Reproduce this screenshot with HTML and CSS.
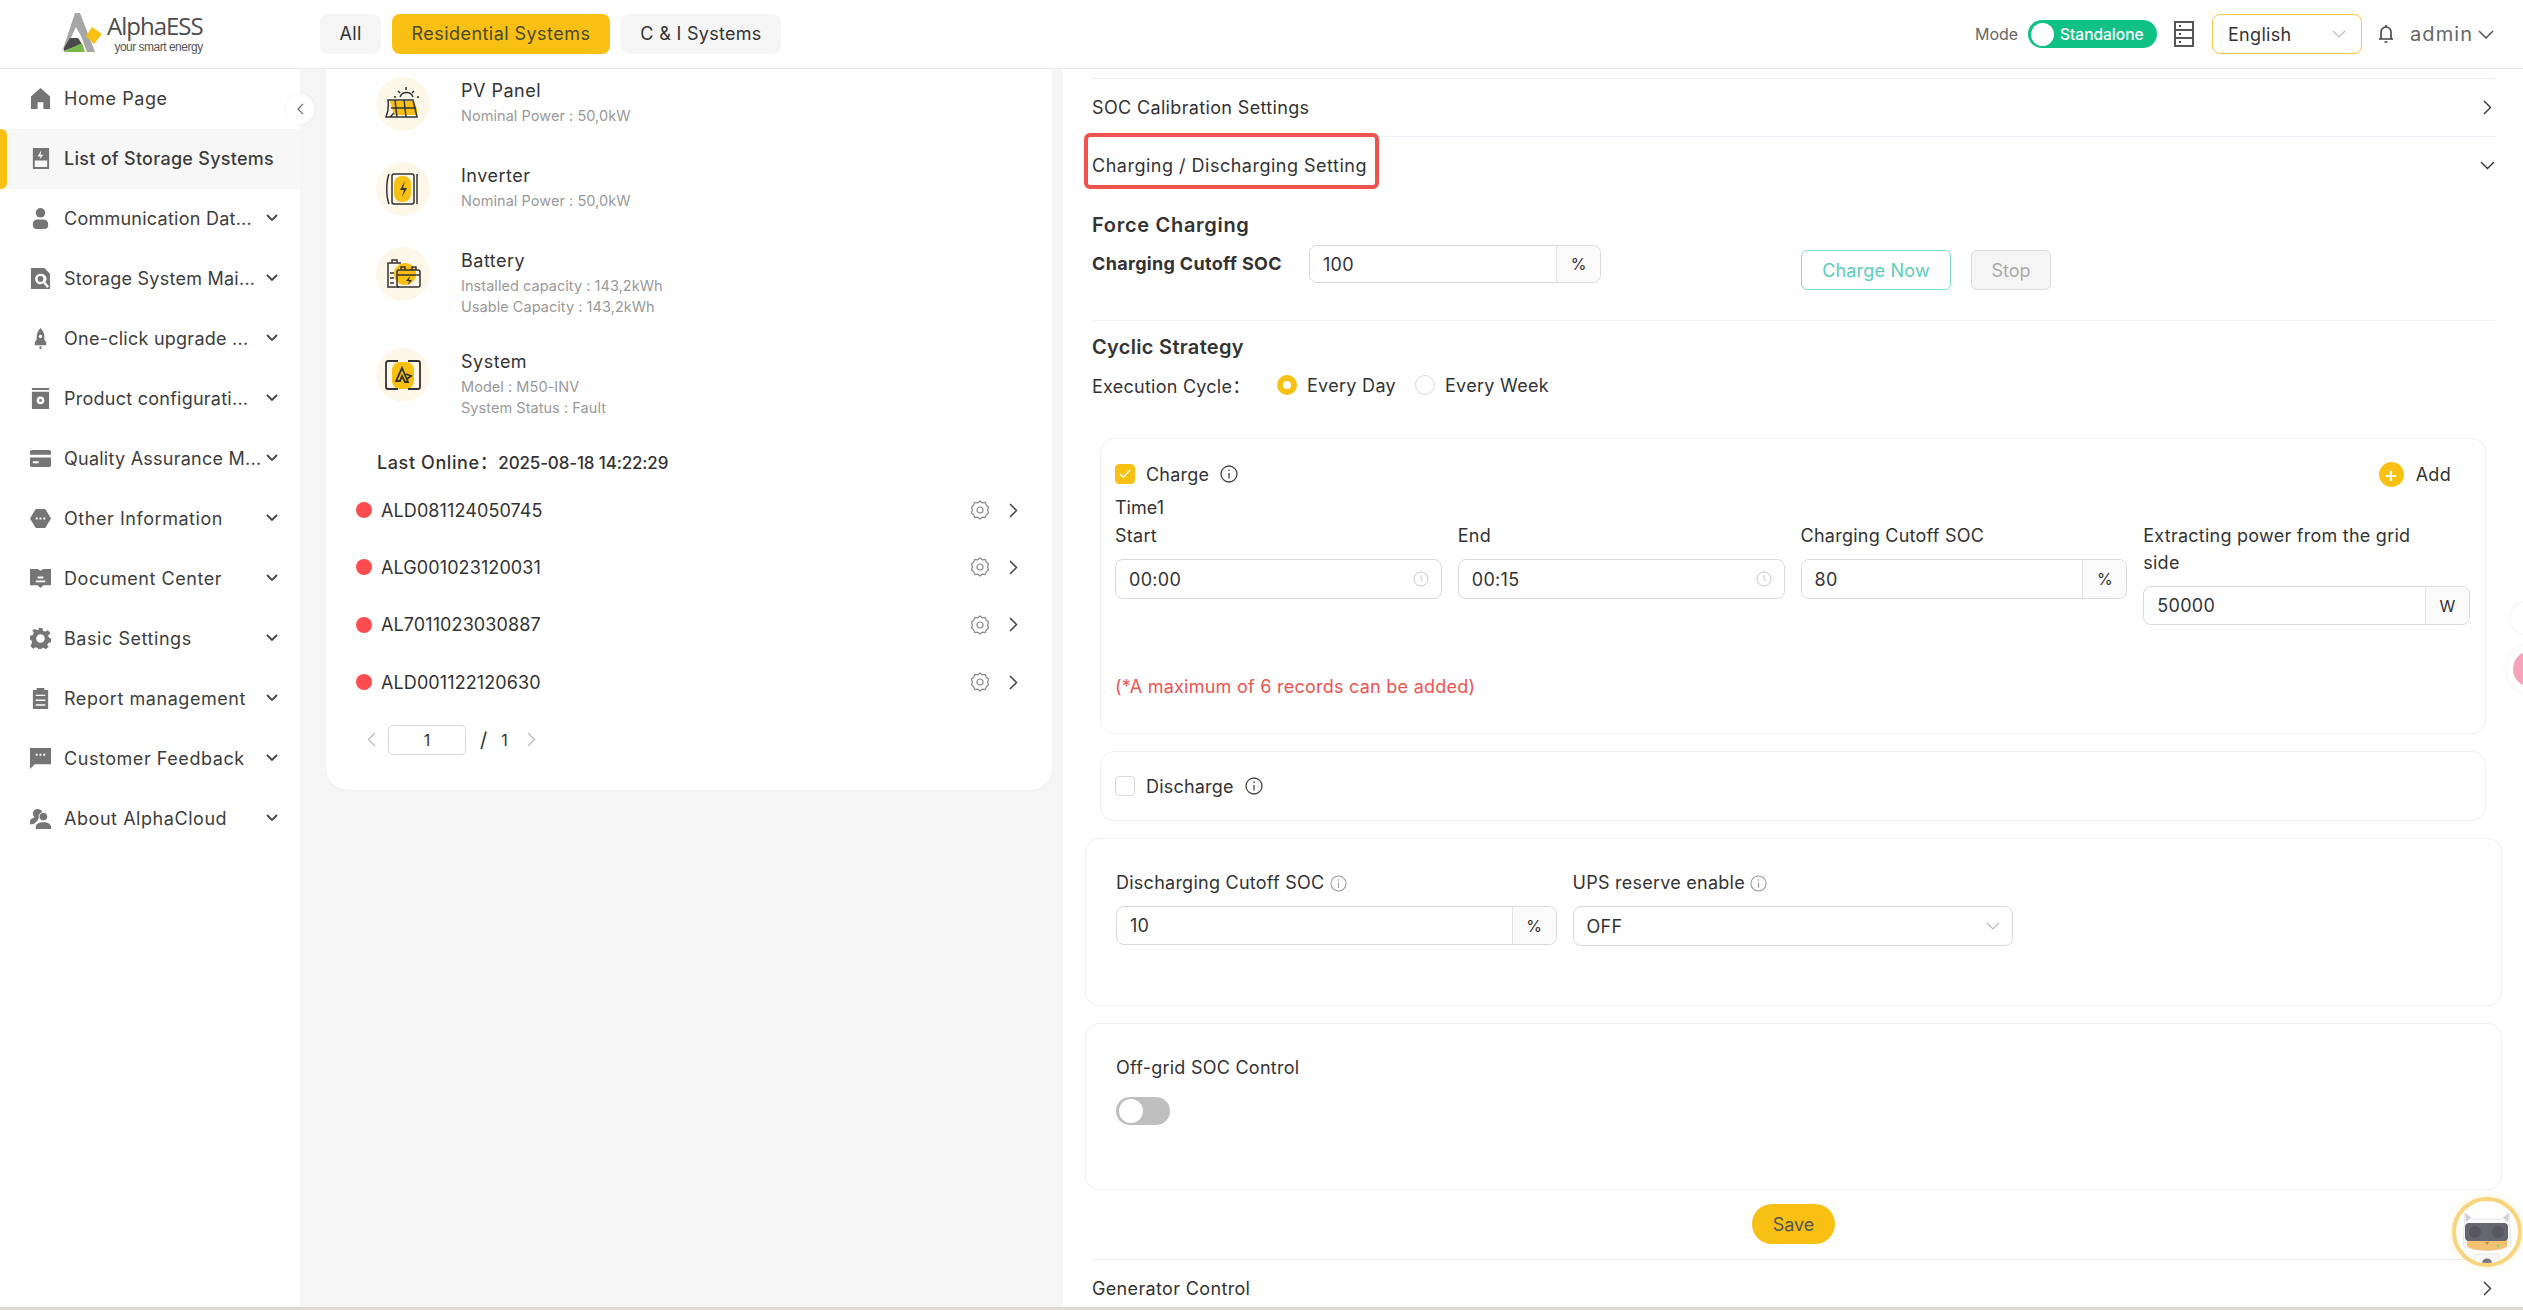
FILE: index.html
```html
<!DOCTYPE html>
<html lang="en">
<head>
    <meta charset="UTF-8">
    <meta name="viewport" content="width=device-width, initial-scale=1.0">
    <title>AlphaESS</title>
    <link rel="stylesheet" href="styles.css">
</head>
<body>
    <header class="topbar">
        <div class="logo">
            <svg class="logo-mark" viewBox="0 0 42 40" width="42" height="40">
                <path d="M13 0h5l15 39h-8l-6-16-5-9-6 13-8 12Z" fill="#a6a6a6"/>
                <path d="M2 35 8 25h8l4 6-18 7Z" fill="#4a4a4a"/>
                <path d="M1 39 20 30l3 9Z" fill="#7ab648"/>
                <path d="M24 23 30 14l10 7-8 10Z" fill="#f8c012"/>
            </svg>
            <div class="logo-text">
                <div class="logo-name">AlphaESS</div>
                <div class="logo-tag">your smart energy</div>
            </div>
        </div>
        <nav class="tabs">
            <span class="tab">All</span>
            <span class="tab tab-active">Residential Systems</span>
            <span class="tab">C &amp; I Systems</span>
        </nav>
        <div class="top-right">
            <span class="mode-label">Mode</span>
            <span class="mode-switch"><i class="mode-knob"></i>Standalone</span>
            <svg class="server-icon" viewBox="0 0 20 26" width="20" height="26" fill="none" stroke="#555" stroke-width="2">
                <rect x="1" y="1" width="18" height="24"/>
                <path d="M1 9h18M1 17h18"/>
                <path d="M5 5h2M5 13h2M5 21h2"/>
            </svg>
            <div class="lang-select">
                <span>English</span>
                <svg viewBox="0 0 14 8" width="14" height="8" fill="none" stroke="#bbb" stroke-width="1.2"><path d="M1 1l6 6 6-6"/></svg>
            </div>
            <svg class="bell-icon" viewBox="0 0 16 20" width="16" height="20" fill="none" stroke="#444" stroke-width="1.6">
                <path d="M3 15V8a5 5 0 0 1 10 0v7ZM1 15h14"/>
                <path d="M8 1v2M6.5 18h3"/>
            </svg>
            <span class="user-name">admin</span>
            <svg viewBox="0 0 16 9" width="16" height="9" fill="none" stroke="#555" stroke-width="1.5"><path d="M1 1l7 7 7-7"/></svg>
        </div>
    </header>

    <div class="layout">
        <aside class="sidebar">
            <div class="collapse-btn">
                <svg viewBox="0 0 8 14" width="7" height="12" fill="none" stroke="#666" stroke-width="1.4"><path d="M7 1 1 7l6 6"/></svg>
            </div>
            <a class="nav-item">
                <svg class="nav-icon" viewBox="0 0 22 22"><path d="M11 0 1 9v13h7v-7h6v7h7V9Z"/></svg>
                <span class="nav-text">Home Page</span>
            </a>
            <a class="nav-item nav-active">
                <svg class="nav-icon" viewBox="0 0 22 22"><path fill-rule="evenodd" d="M3 0h17v22H3ZM5 13v7h13v-7ZM12 2 8 9h3l-1 3 4-5h-3Z"/></svg>
                <span class="nav-text">List of Storage Systems</span>
            </a>
            <a class="nav-item">
                <svg class="nav-icon" viewBox="0 0 22 22"><circle cx="11" cy="5" r="5"/><path d="M3 16a5 5 0 0 1 5-4h6a5 5 0 0 1 5 4v2a4 4 0 0 1-4 4H7a4 4 0 0 1-4-4Z"/></svg>
                <span class="nav-text nav-cut">Communication Dat...</span>
                <svg class="nav-arrow" viewBox="0 0 12 8"><path d="M1 1l5 5 5-5"/></svg>
            </a>
            <a class="nav-item">
                <svg class="nav-icon" viewBox="0 0 22 22"><path fill-rule="evenodd" d="M1 0h14l6 6v16H1ZM11 6a5.500 5.500 0 1 0 3 10l4 5 2-2-4-4a5.500 5.500 0 0 0-5-9Zm0 2.500a3 3 0 1 1 0 6 3 3 0 0 1 0-6Z"/></svg>
                <span class="nav-text nav-cut">Storage System Mai...</span>
                <svg class="nav-arrow" viewBox="0 0 12 8"><path d="M1 1l5 5 5-5"/></svg>
            </a>
            <a class="nav-item">
                <svg class="nav-icon" viewBox="0 0 22 22"><path fill-rule="evenodd" d="M11 0c3 3 4 6 4 9v3l2 3v3h-4H9 5v-3l2-3V9c0-3 1-6 4-9Zm0 7a1.800 1.800 0 1 0 0 3.600 1.800 1.800 0 0 0 0-3.600ZM10 19h2v3h-2Z"/></svg>
                <span class="nav-text nav-cut">One-click upgrade ...</span>
                <svg class="nav-arrow" viewBox="0 0 12 8"><path d="M1 1l5 5 5-5"/></svg>
            </a>
            <a class="nav-item">
                <svg class="nav-icon" viewBox="0 0 22 22"><path fill-rule="evenodd" d="M2 0h18v2H2ZM2 4h18v18H2ZM11 9a4 4 0 1 0 0 8 4 4 0 0 0 0-8Zm0 2.500a1.500 1.500 0 1 1 0 3 1.500 1.500 0 0 1 0-3Z"/></svg>
                <span class="nav-text nav-cut">Product configurati...</span>
                <svg class="nav-arrow" viewBox="0 0 12 8"><path d="M1 1l5 5 5-5"/></svg>
            </a>
            <a class="nav-item">
                <svg class="nav-icon" viewBox="0 0 22 22"><path fill-rule="evenodd" d="M2 2h18a2 2 0 0 1 2 2v14a2 2 0 0 1-2 2H2a2 2 0 0 1-2-2V4a2 2 0 0 1 2-2Zm-2 5v3h22V7ZM3 14v2h6v-2Z"/></svg>
                <span class="nav-text nav-cut">Quality Assurance M...</span>
                <svg class="nav-arrow" viewBox="0 0 12 8"><path d="M1 1l5 5 5-5"/></svg>
            </a>
            <a class="nav-item">
                <svg class="nav-icon" viewBox="0 0 22 22"><path fill-rule="evenodd" d="M6 1h10l6 10-6 10H6L0 11Zm0 9v2h2v-2Zm4 0v2h2v-2Zm4 0v2h2v-2Z"/></svg>
                <span class="nav-text">Other Information</span>
                <svg class="nav-arrow" viewBox="0 0 12 8"><path d="M1 1l5 5 5-5"/></svg>
            </a>
            <a class="nav-item">
                <svg class="nav-icon" viewBox="0 0 22 22"><path fill-rule="evenodd" d="M0 1h8l3 2 3-2h8v17h-8l-3 3-3-3H0Zm8 8v2h6V9Zm-2 4v2h10v-2Z"/></svg>
                <span class="nav-text">Document Center</span>
                <svg class="nav-arrow" viewBox="0 0 12 8"><path d="M1 1l5 5 5-5"/></svg>
            </a>
            <a class="nav-item">
                <svg class="nav-icon" viewBox="0 0 22 22"><path fill-rule="evenodd" d="M9 0h4l.6 3 2.400 1 2.600-1.600 2.800 2.800L19 7.800l1 2.400 2 .8v4l-3 .6-1 2.400 1.600 1.400-2.800 2.800-2.600-1.600-2.200.8-.6 2.500H9l-.6-2.700-2.400-1-2.600 1.600-2.800-2.800L2.200 15l-1-2.400L0 12V8l3-.6 1-2.400-1.600-2.600L5.200 1l2.600 1.400L9 2Zm2 6.500a4.500 4.500 0 1 0 0 9 4.500 4.500 0 0 0 0-9Z"/></svg>
                <span class="nav-text">Basic Settings</span>
                <svg class="nav-arrow" viewBox="0 0 12 8"><path d="M1 1l5 5 5-5"/></svg>
            </a>
            <a class="nav-item">
                <svg class="nav-icon" viewBox="0 0 22 22"><path fill-rule="evenodd" d="M7 0h8v2h4v20H3V2h4Zm-1 7v1.500h10V7Zm0 5v1.500h10V12Zm0 5v1.500h10V17Z"/></svg>
                <span class="nav-text">Report management</span>
                <svg class="nav-arrow" viewBox="0 0 12 8"><path d="M1 1l5 5 5-5"/></svg>
            </a>
            <a class="nav-item">
                <svg class="nav-icon" viewBox="0 0 22 22"><path fill-rule="evenodd" d="M0 0h22v17H5l-5 5ZM6 6v2h2V6Zm4 0v2h2V6Zm4 0v2h2V6Z"/></svg>
                <span class="nav-text">Customer Feedback</span>
                <svg class="nav-arrow" viewBox="0 0 12 8"><path d="M1 1l5 5 5-5"/></svg>
            </a>
            <a class="nav-item">
                <svg class="nav-icon" viewBox="0 0 22 22"><circle cx="8" cy="6" r="5"/><path d="M0 14c0-2 2-3 4-4h5l-1 3-3 3-2 1H0Z"/><circle cx="14" cy="9" r="4.500" stroke="#fff"/><path d="M6 22v-2c0-3 3-5 8-5s8 2 8 5v2Z"/></svg>
                <span class="nav-text">About AlphaCloud</span>
                <svg class="nav-arrow" viewBox="0 0 12 8"><path d="M1 1l5 5 5-5"/></svg>
            </a>
        </aside>

        <section class="device-panel">
            <div class="device-info">
                <div class="device-icon">
                    <svg viewBox="0 0 36 36" width="36" height="36" fill="none" stroke="#333" stroke-width="1.500">
                        <path d="M5 15h24l3 8v6H9Z" fill="#f8c012" stroke="none"/>
                        <path d="M3 14h25l4 17H1c2-5 3-10 2-17ZM5 31l4-4M10 14l2 17M19 14l2 17M6 22h25"/>
                        <path d="M15 11a7 7 0 0 1 13 0M21 1v3M13 5l2 2M29 5l-2 2M9 11h2M32 11h2"/>
                    </svg>
                </div>
                <div class="device-text">
                    <div class="device-name">PV Panel</div>
                    <div class="device-sub">Nominal Power : 50,0kW</div>
                </div>
            </div>
            <div class="device-info">
                <div class="device-icon">
                    <svg viewBox="0 0 36 36" width="36" height="36" fill="none" stroke="#333" stroke-width="1.500">
                        <rect x="9" y="5" width="17" height="26" rx="8" fill="#f8c012" stroke="none"/>
                        <rect x="7" y="3" width="22" height="30" rx="2"/>
                        <path d="M4 3c-3 8-3 22 0 30M32 3v30"/>
                        <path d="M20 10l-5 9h4l-2 7 5-9h-4Z" fill="#333" stroke="none"/>
                    </svg>
                </div>
                <div class="device-text">
                    <div class="device-name">Inverter</div>
                    <div class="device-sub">Nominal Power : 50,0kW</div>
                </div>
            </div>
            <div class="device-info">
                <div class="device-icon">
                    <svg viewBox="0 0 36 36" width="36" height="36" fill="none" stroke="#333" stroke-width="1.500">
                        <circle cx="20" cy="18" r="11" fill="#f8c012" stroke="none"/>
                        <path d="M14 31H3V7h13M7 7V4h5v3M5 17h4M5 22h4M5 27h4"/>
                        <rect x="12" y="14" width="23" height="17" rx="2"/>
                        <path d="M16 14v-3h4v3M27 14v-3h4v3M12 19h23"/>
                        <path d="M25 20l-4 5h3l-1 4 4-5h-3Z" fill="#333" stroke="none"/>
                    </svg>
                </div>
                <div class="device-text">
                    <div class="device-name">Battery</div>
                    <div class="device-sub">Installed capacity : 143,2kWh</div>
                    <div class="device-sub">Usable Capacity : 143,2kWh</div>
                </div>
            </div>
            <div class="device-info device-last">
                <div class="device-icon">
                    <svg viewBox="0 0 36 36" width="36" height="36" fill="none" stroke="#333" stroke-width="1.800">
                        <rect x="7" y="5" width="22" height="27" rx="8" fill="#f8c012" stroke="none"/>
                        <path d="M13 4H3a2 2 0 0 0-2 2v24a2 2 0 0 0 2 2h10M23 4h10a2 2 0 0 1 2 2v24a2 2 0 0 1-2 2H23"/>
                        <path d="M17 11l-6 13h4l2-5 3 6h3ZM21 17l5 2-4 3"/>
                    </svg>
                </div>
                <div class="device-text">
                    <div class="device-name">System</div>
                    <div class="device-sub">Model : M50-INV</div>
                    <div class="device-sub">System Status : Fault</div>
                </div>
            </div>

            <div class="last-online">Last Online：<span class="last-date">2025-08-18 14:22:29</span></div>

            <div class="sn-list">
                <div class="sn-row">
                    <i class="sn-dot"></i>
                    <span class="sn-code">ALD081124050745</span>
                    <svg class="sn-gear" viewBox="0 0 20 20"><path d="M10 1l2.300 1.800 2.900-.3 1.100 2.700 2.200 1.800-.9 3 .9 3-2.200 1.800-1.100 2.700-2.900-.3L10 19l-2.300-1.800-2.900.3-1.100-2.700-2.200-1.800.9-3-.9-3 2.200-1.800 1.100-2.700 2.900.3Z"/><circle cx="10" cy="10" r="3"/></svg>
                    <svg class="sn-arrow" viewBox="0 0 9 15"><path d="M1 1l6.500 6.500L1 14"/></svg>
                </div>
                <div class="sn-row">
                    <i class="sn-dot"></i>
                    <span class="sn-code">ALG001023120031</span>
                    <svg class="sn-gear" viewBox="0 0 20 20"><path d="M10 1l2.300 1.800 2.900-.3 1.100 2.700 2.200 1.800-.9 3 .9 3-2.200 1.800-1.100 2.700-2.900-.3L10 19l-2.300-1.800-2.900.3-1.100-2.700-2.200-1.800.9-3-.9-3 2.200-1.800 1.100-2.700 2.900.3Z"/><circle cx="10" cy="10" r="3"/></svg>
                    <svg class="sn-arrow" viewBox="0 0 9 15"><path d="M1 1l6.500 6.500L1 14"/></svg>
                </div>
                <div class="sn-row">
                    <i class="sn-dot"></i>
                    <span class="sn-code">AL7011023030887</span>
                    <svg class="sn-gear" viewBox="0 0 20 20"><path d="M10 1l2.300 1.800 2.900-.3 1.100 2.700 2.200 1.800-.9 3 .9 3-2.200 1.800-1.100 2.700-2.900-.3L10 19l-2.300-1.800-2.900.3-1.100-2.700-2.200-1.800.9-3-.9-3 2.200-1.800 1.100-2.700 2.900.3Z"/><circle cx="10" cy="10" r="3"/></svg>
                    <svg class="sn-arrow" viewBox="0 0 9 15"><path d="M1 1l6.500 6.500L1 14"/></svg>
                </div>
                <div class="sn-row">
                    <i class="sn-dot"></i>
                    <span class="sn-code">ALD001122120630</span>
                    <svg class="sn-gear" viewBox="0 0 20 20"><path d="M10 1l2.300 1.800 2.900-.3 1.100 2.700 2.200 1.800-.9 3 .9 3-2.200 1.800-1.100 2.700-2.900-.3L10 19l-2.300-1.800-2.900.3-1.100-2.700-2.200-1.800.9-3-.9-3 2.200-1.800 1.100-2.700 2.900.3Z"/><circle cx="10" cy="10" r="3"/></svg>
                    <svg class="sn-arrow" viewBox="0 0 9 15"><path d="M1 1l6.500 6.500L1 14"/></svg>
                </div>
            </div>

            <div class="pager">
                <svg class="pager-arrow" viewBox="0 0 9 15"><path d="M8 1 1.500 7.500 8 14"/></svg>
                <span class="pager-input">1</span>
                <span class="pager-slash">/</span>
                <span class="pager-total">1</span>
                <svg class="pager-arrow" viewBox="0 0 9 15"><path d="M1 1l6.500 6.500L1 14"/></svg>
            </div>
        </section>

        <main class="settings-panel">
            <div class="fold-row fold-first">
                <span>SOC Calibration Settings</span>
                <svg class="fold-arrow" viewBox="0 0 9 15"><path d="M1 1l6.500 6.500L1 14"/></svg>
            </div>
            <div class="fold-row fold-open">
                <span>Charging / Discharging Setting</span>
                <svg class="fold-arrow-down" viewBox="0 0 15 9"><path d="M1 1l6.500 6.500L14 1"/></svg>
                <div class="mark-box"></div>
            </div>

            <section class="force-block">
                <h2 class="block-title">Force Charging</h2>
                <div class="force-row">
                    <label class="force-label">Charging Cutoff SOC</label>
                    <div class="field force-field"><span class="field-value">100</span><span class="field-unit">%</span></div>
                    <button class="btn-charge">Charge Now</button>
                    <button class="btn-stop">Stop</button>
                </div>
            </section>

            <section class="cyclic-block">
                <h2 class="block-title">Cyclic Strategy</h2>
                <div class="cycle-row">
                    <span class="cycle-label">Execution Cycle：</span>
                    <span class="radio radio-on"></span><span class="radio-text">Every Day</span>
                    <span class="radio"></span><span class="radio-text">Every Week</span>
                </div>
            </section>

            <div class="card charge-card">
                <div class="check-row">
                    <span class="check check-on">
                        <svg viewBox="0 0 14 12" width="12" height="10" fill="none" stroke="#fff" stroke-width="1.600"><path d="M1 6l4 4 8-9"/></svg>
                    </span>
                    <span class="check-text">Charge</span>
                    <svg class="info-icon" viewBox="0 0 18 18"><circle cx="9" cy="9" r="8"/><path d="M9 8v5.500M9 4.500v1.500"/></svg>
                    <span class="add-btn"><i class="add-dot">+</i>Add</span>
                </div>
                <div class="time-title">Time1</div>
                <div class="time-grid">
                    <div>
                        <div class="field-label">Start</div>
                        <div class="field time-field"><span class="field-value">00:00</span>
                            <svg class="clock-icon" viewBox="0 0 16 16"><circle cx="8" cy="8" r="7"/><path d="M8 4v4.500l2 1.500"/></svg>
                        </div>
                    </div>
                    <div>
                        <div class="field-label">End</div>
                        <div class="field time-field"><span class="field-value">00:15</span>
                            <svg class="clock-icon" viewBox="0 0 16 16"><circle cx="8" cy="8" r="7"/><path d="M8 4v4.500l2 1.500"/></svg>
                        </div>
                    </div>
                    <div>
                        <div class="field-label">Charging Cutoff SOC</div>
                        <div class="field time-field"><span class="field-value">80</span><span class="field-unit">%</span></div>
                    </div>
                    <div>
                        <div class="field-label">Extracting power from the grid<br>side</div>
                        <div class="field"><span class="field-value">50000</span><span class="field-unit">W</span></div>
                    </div>
                </div>
                <p class="limit-note">(*A maximum of 6 records can be added)</p>
            </div>

            <div class="card discharge-card">
                <span class="check"></span>
                <span class="check-text">Discharge</span>
                <svg class="info-icon" viewBox="0 0 18 18"><circle cx="9" cy="9" r="8"/><path d="M9 8v5.500M9 4.500v1.500"/></svg>
            </div>

            <div class="card wide-card soc-card">
                <div class="soc-grid">
                    <div>
                        <div class="field-label">Discharging Cutoff SOC <svg class="info-small" viewBox="0 0 18 18"><circle cx="9" cy="9" r="8"/><path d="M9 8v5.500M9 4.500v1.500"/></svg></div>
                        <div class="field"><span class="field-value">10</span><span class="field-unit">%</span></div>
                    </div>
                    <div>
                        <div class="field-label">UPS reserve enable <svg class="info-small" viewBox="0 0 18 18"><circle cx="9" cy="9" r="8"/><path d="M9 8v5.500M9 4.500v1.500"/></svg></div>
                        <div class="field select-field"><span class="field-value">OFF</span>
                            <svg viewBox="0 0 14 8" width="14" height="8" fill="none" stroke="#bbb" stroke-width="1.200"><path d="M1 1l6 6 6-6"/></svg>
                        </div>
                    </div>
                </div>
            </div>

            <div class="card wide-card offgrid-card">
                <div class="field-label">Off-grid SOC Control</div>
                <span class="off-switch"><i class="off-knob"></i></span>
            </div>

            <div class="save-row"><button class="btn-save">Save</button></div>

            <div class="fold-row">
                <span>Generator Control</span>
                <svg class="fold-arrow" viewBox="0 0 9 15"><path d="M1 1l6.500 6.500L1 14"/></svg>
            </div>
        </main>

        <div class="float-white"></div>
        <div class="float-pink"></div>
        <div class="assistant">
            <svg viewBox="0 0 62 62" width="62" height="62">
                <path d="M9 12l8 6h28l8-6 2 32c-4 7-44 7-48 0Z" fill="#f8f8f9" stroke="#e6e6e8"/>
                <path d="M9 12l6 5-5 4ZM53 12l-6 5 5 4Z" fill="#cfcfd6"/>
                <path d="M11 38h40v7c-5 6-35 6-40 0Z" fill="#f4c071"/>
                <rect x="9" y="22" width="43" height="18" rx="4" fill="#66676e"/>
                <circle cx="19" cy="31" r="6" fill="#585960"/>
                <circle cx="42" cy="31" r="6" fill="#585960"/>
                <path d="M29 41h4l-2 3Z" fill="#b78a43"/>
                <circle cx="42" cy="45" r="1.500" fill="#8bd46a"/>
                <path d="M19 53h24v9H19Z" fill="#f8f8f9" stroke="#e8e8ea"/>
                <path d="M26 62c0-6 10-6 10 0Z" fill="#77777c"/>
            </svg>
        </div>
    </div>
    <div class="page-end"></div>
</body>
</html>
```

FILE: styles.css
```css
* {
    box-sizing: border-box;
}

html,
body {
    height: 100%;
}

body {
    margin: 0;
    display: flex;
    flex-direction: column;
    overflow: hidden;
    background: #fff;
    font-family: 'Inter', 'Noto Sans CJK SC', sans-serif;
    font-size: 18px;
    color: #333;
}

.topbar {
    height: 69px;
    flex: none;
    display: flex;
    align-items: center;
    background: #fff;
    border-bottom: 1px solid #eaeaea;
    position: relative;
    padding-bottom: 1px;
}

.logo {
    width: 320px;
    padding-left: 62px;
    display: flex;
    align-items: flex-start;
    gap: 3px;
}

.logo-mark {
    margin-top: 1px;
}

.logo-text {
    color: #555;
    text-align: right;
}

.logo-name {
    font-family: 'Open Sans', sans-serif;
    font-size: 24px;
    line-height: 28px;
    letter-spacing: -1px;
    color: #4d4d4d;
}

.logo-tag {
    font-family: 'Liberation Sans', sans-serif;
    font-size: 12px;
    line-height: 15px;
    letter-spacing: -0.5px;
}

.tabs {
    display: flex;
    gap: 11px;
}

.tab {
    height: 40px;
    line-height: 40px;
    padding: 0 19.500px;
    background: #f5f5f5;
    border-radius: 8px;
    font-size: 18px;
    letter-spacing: 0.3px;
    color: #333;
}

.tab-active {
    background: #f8c012;
    color: #4b4b2b;
    letter-spacing: 0.45px;
}

.top-right {
    position: absolute;
    left: 1975px;
    top: 0;
    height: 68px;
    display: flex;
    align-items: center;
}

.mode-label {
    font-size: 16px;
    color: #666;
    width: 53px;
}

.mode-switch {
    width: 129px;
    height: 28px;
    border-radius: 14px;
    background: #10c186;
    color: #fff;
    font-size: 15.500px;
    font-weight: 500;
    display: flex;
    align-items: center;
    padding-left: 3px;
    gap: 6px;
}

.mode-knob {
    width: 23px;
    height: 23px;
    border-radius: 50%;
    background: #fff;
}

.server-icon {
    margin-left: 17px;
}

.lang-select {
    width: 150px;
    height: 40px;
    margin-left: 18px;
    padding: 0 15px;
    display: flex;
    align-items: center;
    justify-content: space-between;
    border: 1.500px solid #f8c740;
    border-radius: 8px;
    font-size: 18px;
    color: #333;
    letter-spacing: 0.3px;
}

.bell-icon {
    margin-left: 16px;
}

.user-name {
    margin-left: 16px;
    margin-right: 5px;
    font-size: 20px;
    letter-spacing: 1.1px;
    color: #666;
}

.layout {
    flex: 1;
    min-height: 0;
    display: flex;
    position: relative;
    overflow: hidden;
    background: #f5f5f5;
}

.sidebar {
    width: 300px;
    flex: none;
    background: #fff;
    position: relative;
}

.collapse-btn {
    position: absolute;
    right: -14px;
    top: 25px;
    width: 28px;
    height: 30px;
    border-radius: 50%;
    background: #fff;
    display: flex;
    align-items: center;
    justify-content: center;
    box-shadow: 0 0 4px rgba(0, 0, 0, 0.05);
}

.nav-item {
    height: 60px;
    display: flex;
    align-items: center;
    padding: 0 0 1px 30px;
    position: relative;
}

.nav-active {
    background: #f7f7f7;
    font-weight: 500;
}

.nav-active .nav-text {
    letter-spacing: 0.27px;
}

.nav-active::before {
    content: '';
    position: absolute;
    left: 0;
    top: 0;
    bottom: 0;
    width: 7px;
    background: #f8c012;
    border-radius: 0 6px 6px 0;
}

.nav-icon {
    width: 21px;
    height: 21px;
    flex: none;
    fill: #757575;
}

.nav-text {
    margin-left: 13px;
    font-size: 18px;
    letter-spacing: 0.55px;
    white-space: nowrap;
    color: #3d3d3d;
}

.nav-cut {
    letter-spacing: 0.25px;
}

.nav-arrow {
    position: absolute;
    left: 266px;
    top: 25px;
    width: 12px;
    height: 8px;
    fill: none;
    stroke: #444;
    stroke-width: 1.800;
}

.device-panel {
    width: 726px;
    height: 721px;
    flex: none;
    margin-left: 26px;
    padding: 8px 32px 0 29px;
    background: #fff;
    border-radius: 0 0 22px 22px;
    box-shadow: 0 1px 2px rgba(0, 0, 0, 0.03);
}

.device-info {
    display: flex;
    height: 85px;
    padding-left: 21px;
}

.device-last {
    height: 99.500px;
}

.device-info:nth-child(3) {
    height: 101px;
}

.device-icon {
    width: 54px;
    height: 54px;
    border-radius: 50%;
    background: #fdf7e9;
    display: flex;
    align-items: center;
    justify-content: center;
    flex: none;
}

.device-text {
    margin-left: 31px;
}

.device-name {
    font-size: 18px;
    line-height: 28px;
    letter-spacing: 0.5px;
    color: #333;
}

.device-sub {
    font-size: 14.500px;
    line-height: 21px;
    letter-spacing: 0.05px;
    color: #999;
}

.last-online {
    padding-left: 22px;
    height: 30px;
    line-height: 30px;
    font-size: 18px;
    font-weight: 500;
    letter-spacing: 0.6px;
    color: #333;
}

.last-date {
    font-size: 17px;
    letter-spacing: -0.15px;
}

.sn-list {
    margin-top: 4px;
}

.sn-row {
    height: 57.300px;
    display: flex;
    align-items: center;
}

.sn-dot {
    width: 16px;
    height: 16px;
    margin-left: 1px;
    border-radius: 50%;
    background: #ff4d4f;
    flex: none;
}

.sn-code {
    margin-left: 9px;
    flex: 1;
    font-size: 18px;
    letter-spacing: 0.1px;
}

.sn-gear {
    width: 20px;
    height: 20px;
    fill: none;
    stroke: #888;
    stroke-width: 1.200;
}

.sn-arrow {
    width: 9px;
    height: 15px;
    margin: 0 2px 0 19px;
    fill: none;
    stroke: #444;
    stroke-width: 1.500;
}

.pager {
    margin-top: 14px;
    padding-left: 12px;
    display: flex;
    align-items: center;
}

.pager-arrow {
    width: 9px;
    height: 15px;
    fill: none;
    stroke: #bbb;
    stroke-width: 1.300;
}

.pager-input {
    width: 78px;
    height: 30px;
    margin-left: 12px;
    border: 1px solid #d9d9d9;
    border-radius: 5px;
    text-align: center;
    font-size: 16px;
    line-height: 28px;
}

.pager-slash {
    margin-left: 14px;
    font-size: 20px;
}

.pager-total {
    margin-left: 14px;
    margin-right: 19px;
    font-size: 16px;
}

.settings-panel {
    flex: 1;
    margin-left: 11px;
    padding: 9px 28px 0 29px;
    min-width: 0;
    background: #fff;
}

.fold-row {
    height: 58px;
    display: flex;
    align-items: center;
    justify-content: space-between;
    position: relative;
    border-top: 1px solid #ebeef5;
    font-size: 18px;
    letter-spacing: 0.35px;
    color: #333;
    padding-right: 3px;
}

.fold-open {
    height: 60px;
    padding-bottom: 2px;
    letter-spacing: 0.5px;
}

.fold-arrow {
    width: 9px;
    height: 15px;
    fill: none;
    stroke: #333;
    stroke-width: 1.400;
}

.fold-arrow-down {
    width: 15px;
    height: 9px;
    margin-right: -3px;
    fill: none;
    stroke: #333;
    stroke-width: 1.400;
}

.mark-box {
    position: absolute;
    left: -8px;
    top: -4px;
    width: 295px;
    height: 56px;
    border: 4px solid #ef5350;
    border-radius: 6px;
}

.force-block {
    padding-top: 14px;
    height: 125px;
    border-bottom: 1px solid #f3f3f3;
}

.block-title {
    margin: 0;
    font-size: 20px;
    line-height: 30px;
    font-weight: 600;
    letter-spacing: 0.3px;
    color: #333;
}

.force-block .block-title {
    letter-spacing: 0.7px;
}

.force-row {
    margin-top: 5px;
    display: flex;
    align-items: flex-start;
}

.force-label {
    width: 217px;
    line-height: 38px;
    font-weight: 700;
    font-size: 18px;
    letter-spacing: 0.32px;
}

.field {
    height: 39px;
    display: flex;
    align-items: stretch;
    border: 1px solid #d9d9d9;
    border-radius: 8px;
    font-size: 18px;
    overflow: hidden;
}

.field-value {
    flex: 1;
    padding-left: 13px;
    align-self: center;
    letter-spacing: 0.3px;
}

.field-unit {
    width: 44px;
    flex: none;
    display: flex;
    align-items: center;
    justify-content: center;
    background: #fafafa;
    border-left: 1px solid #e4e4e4;
    font-size: 16px;
}

.force-field {
    width: 292px;
    height: 38px;
}

.btn-charge {
    width: 150px;
    height: 40px;
    margin: 5px 0 0 200px;
    background: #fff;
    border: 1.500px solid #7ddccb;
    border-radius: 6px;
    color: #5ccdb9;
    font: inherit;
    font-size: 18px;
    letter-spacing: 0.2px;
}

.btn-stop {
    width: 80px;
    height: 40px;
    margin: 5px 0 0 20px;
    background: #f5f5f5;
    border: 1px solid #ddd;
    border-radius: 6px;
    color: #aaa;
    font: inherit;
    font-size: 18px;
}

.cyclic-block {
    padding-top: 11px;
}

.cycle-row {
    margin-top: 8px;
    height: 30px;
    display: flex;
    align-items: center;
}

.cycle-label {
    width: 185px;
    letter-spacing: 0.25px;
}

.radio {
    width: 20px;
    height: 20px;
    border: 1px solid #d9d9d9;
    border-radius: 50%;
    background: #fff;
    flex: none;
}

.radio-on {
    border: 6px solid #f8c012;
}

.radio-text {
    margin-left: 10px;
    width: 108px;
    letter-spacing: 0.3px;
}

.card {
    border: 1px solid #f0f0f0;
    border-radius: 14px;
    background: #fff;
}

.charge-card {
    margin: 38px 9px 0 8px;
    height: 296px;
    padding: 22px 15px 0 14px;
}

.check-row {
    height: 26px;
    display: flex;
    align-items: center;
}

.check {
    width: 20px;
    height: 20px;
    border: 1px solid #d9d9d9;
    border-radius: 4px;
    display: flex;
    align-items: center;
    justify-content: center;
    flex: none;
}

.check-on {
    background: #f8c012;
    border-color: #f8c012;
}

.check-text {
    margin-left: 11px;
    letter-spacing: 0.2px;
}

.info-icon {
    width: 18px;
    height: 18px;
    margin-left: 11px;
    fill: none;
    stroke: #444;
    stroke-width: 1.300;
}

.add-btn {
    margin-left: auto;
    margin-right: 19px;
    display: flex;
    align-items: center;
    letter-spacing: 0.3px;
}

.add-dot {
    width: 25px;
    height: 25px;
    margin-right: 12px;
    border-radius: 50%;
    background: #f8c012;
    color: #fff;
    font-style: normal;
    font-size: 22px;
    line-height: 24px;
    text-align: center;
}

.time-title {
    margin-top: 7px;
    line-height: 27px;
}

.time-grid {
    margin-top: 1px;
    display: grid;
    grid-template-columns: repeat(4, 1fr);
    column-gap: 16px;
    align-items: start;
}

.field-label {
    line-height: 27px;
    margin-bottom: 10px;
    letter-spacing: 0.25px;
}

.time-field {
    height: 40px;
}

.clock-icon {
    width: 16px;
    height: 16px;
    align-self: center;
    margin-right: 12px;
    fill: none;
    stroke: #c4c4c4;
    stroke-width: 1;
}

.limit-note {
    margin: 48px 0 0;
    line-height: 27px;
    color: #ef5350;
    letter-spacing: 0.25px;
}

.discharge-card {
    margin: 17px 9px 0 8px;
    height: 70px;
    padding-left: 14px;
    display: flex;
    align-items: center;
}

.wide-card {
    margin: 17px -7px 0 -7px;
}

.soc-card {
    height: 168px;
    padding: 30px 0 0 30px;
}

.soc-grid {
    width: 897px;
    display: grid;
    grid-template-columns: 1fr 1fr;
    column-gap: 16px;
}

.info-small {
    width: 17px;
    height: 17px;
    vertical-align: -3px;
    fill: none;
    stroke: #999;
    stroke-width: 1.100;
}

.select-field {
    align-items: center;
    padding-right: 12px;
    height: 40px;
}

.offgrid-card {
    height: 167px;
    padding: 30px 0 0 30px;
}

.off-switch {
    display: block;
    width: 54px;
    height: 28px;
    margin-top: 16px;
    padding: 2px 0 0 3px;
    border-radius: 14px;
    background: #bfbfbf;
}

.off-knob {
    display: block;
    width: 24px;
    height: 24px;
    border-radius: 50%;
    background: #fff;
}

.save-row {
    margin-top: 14px;
    margin-bottom: 15px;
    display: flex;
    justify-content: center;
}

.btn-save {
    width: 83px;
    height: 40px;
    border: 0;
    border-radius: 20px;
    background: #f8c012;
    color: #555;
    font: inherit;
    font-size: 18px;
}

.float-white {
    position: absolute;
    right: -20px;
    top: 533px;
    width: 32px;
    height: 32px;
    border-radius: 50%;
    background: #fff;
    box-shadow: 0 0 6px rgba(0, 0, 0, 0.08);
}

.float-pink {
    position: absolute;
    right: -26px;
    top: 582px;
    width: 36px;
    height: 36px;
    border-radius: 50%;
    background: #f4a3ba;
    box-shadow: 0 0 0 6px #fff, 0 0 8px 6px rgba(0, 0, 0, 0.06);
}

.assistant {
    position: absolute;
    left: 2452px;
    top: 1128px;
    width: 70px;
    height: 70px;
    display: flex;
    align-items: flex-end;
    justify-content: center;
    overflow: hidden;
    border: 4px solid #f8d47e;
    border-radius: 50%;
    background: #fff;
    box-shadow: 0 0 6px rgba(248, 192, 18, 0.25);
}

.page-end {
    height: 3px;
    flex: none;
    background: #e0d8d3;
}
```
